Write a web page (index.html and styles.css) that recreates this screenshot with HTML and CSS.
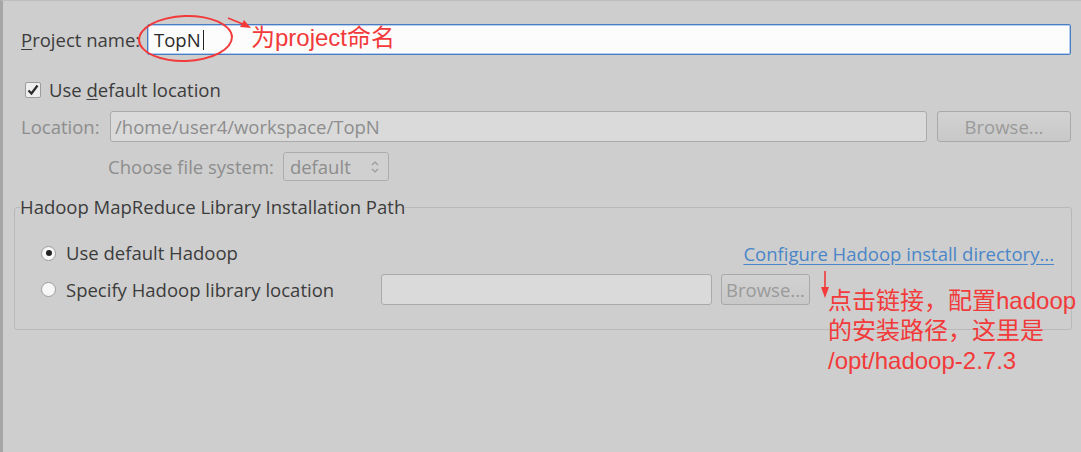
FILE: index.html
```html
<!DOCTYPE html>
<html lang="zh">
<head>
<meta charset="utf-8">
<title>New MapReduce Project</title>
<link rel="stylesheet" href="styles.css">
</head>
<body>
<div class="window">
  <div class="content">
    <div class="row name-row">
      <label class="lbl name-lbl"><u>P</u>roject name:</label>
      <div class="name-field">
        <div class="name-input"><span class="typed">TopN</span><span class="caret"></span></div>
        <span class="ellipse"></span>
        <svg class="arrow-right" width="26" height="14" viewBox="0 0 26 14"><line x1="1" y1="1" x2="18" y2="8" stroke="#f23a3a" stroke-width="1.6"/><polygon points="24,11 13,10 17,3" fill="#f23a3a"/></svg>
        <span class="note note-name">为project命名</span>
      </div>
    </div>

    <div class="row check-row">
      <span class="checkbox"><svg width="14" height="14" viewBox="0 0 14 14"><path d="M2.5 7.5 L5.5 10.5 L11.5 2.5" fill="none" stroke="#2b2b2b" stroke-width="2.2"/></svg></span>
      <span class="lbl">Use <u>d</u>efault location</span>
    </div>

    <div class="row loc-row">
      <span class="lbl dis loc-lbl">Location:</span>
      <div class="field dis-field loc-field">/home/user4/workspace/TopN</div>
      <div class="btn loc-btn">Browse...</div>
    </div>

    <div class="row fs-row">
      <span class="lbl dis">Choose file system:</span>
      <div class="combo"><span>default</span><svg width="8" height="14" viewBox="0 0 8 14"><path d="M1 5 L4 2 L7 5" fill="none" stroke="#9a9a9a" stroke-width="1.2"/><path d="M1 9 L4 12 L7 9" fill="none" stroke="#9a9a9a" stroke-width="1.2"/></svg></div>
    </div>

    <fieldset class="group">
      <legend class="lbl">Hadoop MapReduce Library Installation Path</legend>
      <div class="grow radio-row1">
        <span class="radio on"></span>
        <span class="lbl">Use default Hadoop</span>
        <a class="link">Configure Hadoop install directory...</a>
      </div>
      <div class="grow radio-row2">
        <div class="radio-lbl">
          <span class="radio"></span>
          <span class="lbl">Specify Hadoop library location</span>
        </div>
        <div class="field dis-field lib-field"></div>
        <div class="btn lib-btn">Browse...</div>
        <svg class="arrow-down" width="10" height="28" viewBox="0 0 10 28"><line x1="5" y1="0" x2="5" y2="18" stroke="#f23a3a" stroke-width="1.6"/><polygon points="1,16 9,16 5,27" fill="#f23a3a"/></svg>
        <div class="note note-lib">点击链接，配置hadoop<br>的安装路径，这里是<br>/opt/hadoop-2.7.3</div>
      </div>
    </fieldset>
  </div>
</div>
</body>
</html>
```
FILE: styles.css
```css
* { box-sizing: border-box; }
html, body { margin: 0; padding: 0; }
body {
  background: #cecece;
  font-family: "Open Sans", "Noto Sans", sans-serif;
  font-size: 18.5px;
  color: #3c3c3c;
}
.window {
  height: 452px;
  border-top: 1px solid #bdbdbd;
  border-left: 3px solid #a6a6a6;
}
.content {
  padding: 0 9px 0 11px;
}
.row {
  display: flex;
  align-items: center;
  padding-left: 7px;
}
.lbl { white-space: nowrap; line-height: 22px; }
.dis { color: #8d8d8d; }
u { text-decoration-thickness: 1px; text-underline-offset: 2px; }

.name-row { margin-top: 23px; height: 31px; padding-right: 1px; }
.name-lbl { width: 126px; }
.name-field { position: relative; flex: 1; height: 31px; }
.name-input {
  height: 31px;
  border: 1px solid #4a7cc2;
  box-shadow: inset 0 0 0 1px #b5cdee;
  border-radius: 2px;
  background: #fcfcfc;
  padding-left: 6px;
  display: flex;
  align-items: center;
  color: #2a2a2a;
}
.caret { display: inline-block; width: 1px; height: 20px; background: #222; margin-left: 2px; }
.ellipse {
  position: absolute;
  left: -9px; top: -9px;
  width: 95px; height: 47px;
  border: 2px solid #f23a3a;
  border-radius: 50%;
  transform: rotate(-2deg);
}
.arrow-right { position: absolute; left: 80px; top: -7px; }
.note {
  position: absolute;
  color: #f23a3a;
  font-family: "Liberation Sans", "Noto Sans CJK SC", sans-serif;
  font-size: 24px;
  white-space: nowrap;
}
.note-name { left: 104px; top: 1px; line-height: 26px; }

.check-row { margin-top: 27px; height: 16px; }
.checkbox {
  width: 16px; height: 16px;
  margin-left: 4px; margin-right: 8px;
  border: 1px solid #9c9c9c;
  border-radius: 2px;
  background: #efefef;
  display: flex; align-items: center; justify-content: center;
}

.loc-row { margin-top: 13px; height: 31px; padding-right: 1px; }
.loc-lbl { width: 89px; }
.field {
  height: 31px;
  border: 1px solid #aaaaaa;
  border-radius: 3px;
}
.dis-field {
  background: #dadada;
  color: #8d8d8d;
  padding-left: 4px;
  line-height: 29px;
  white-space: nowrap;
}
.loc-field { flex: 1; }
.btn {
  height: 31px;
  border: 1px solid #a9a9a9;
  border-radius: 3px;
  background: linear-gradient(#d2d2d2, #c8c8c8);
  color: #9a9a9a;
  display: flex; align-items: center; justify-content: center;
  white-space: nowrap;
}
.loc-btn { width: 134px; margin-left: 10px; }

.fs-row { margin-top: 10px; height: 29px; padding-left: 94px; }
.combo {
  margin-left: 9px;
  width: 106px; height: 29px;
  border: 1px solid #acacac;
  border-radius: 3px;
  background: #d0d0d0;
  color: #8d8d8d;
  display: flex; align-items: center; justify-content: space-between;
  padding: 0 9px 0 6px;
}

.group {
  margin: 15px 0 0 0;
  padding: 0 17px 24px 26px;
  border: 1px solid #b9b9b9;
  border-radius: 3px;
}
.group legend { padding: 0; margin-left: -21px; }
.grow { display: flex; align-items: center; }
.radio-row1 { margin-top: 23px; height: 24px; }
.radio {
  width: 15px; height: 15px;
  border-radius: 50%;
  border: 1px solid #9c9c9c;
  background: #f7f7f7;
  margin-right: 10px;
  flex: none;
  display: flex; align-items: center; justify-content: center;
}
.radio.on::after {
  content: "";
  width: 6px; height: 6px;
  border-radius: 50%;
  background: #222;
}
.link {
  margin-left: auto;
  color: #4a86c8;
  text-decoration: underline;
  text-underline-offset: 3px;
  white-space: nowrap;
}
.radio-row2 { margin-top: 9px; height: 31px; position: relative; }
.radio-lbl { width: 340px; display: flex; align-items: center; }
.lib-field { width: 331px; }
.lib-btn { width: 89px; margin-left: 9px; }
.arrow-down { position: absolute; left: 779px; top: -3px; }
.note-lib { left: 787px; top: 12px; line-height: 30px; }
```
